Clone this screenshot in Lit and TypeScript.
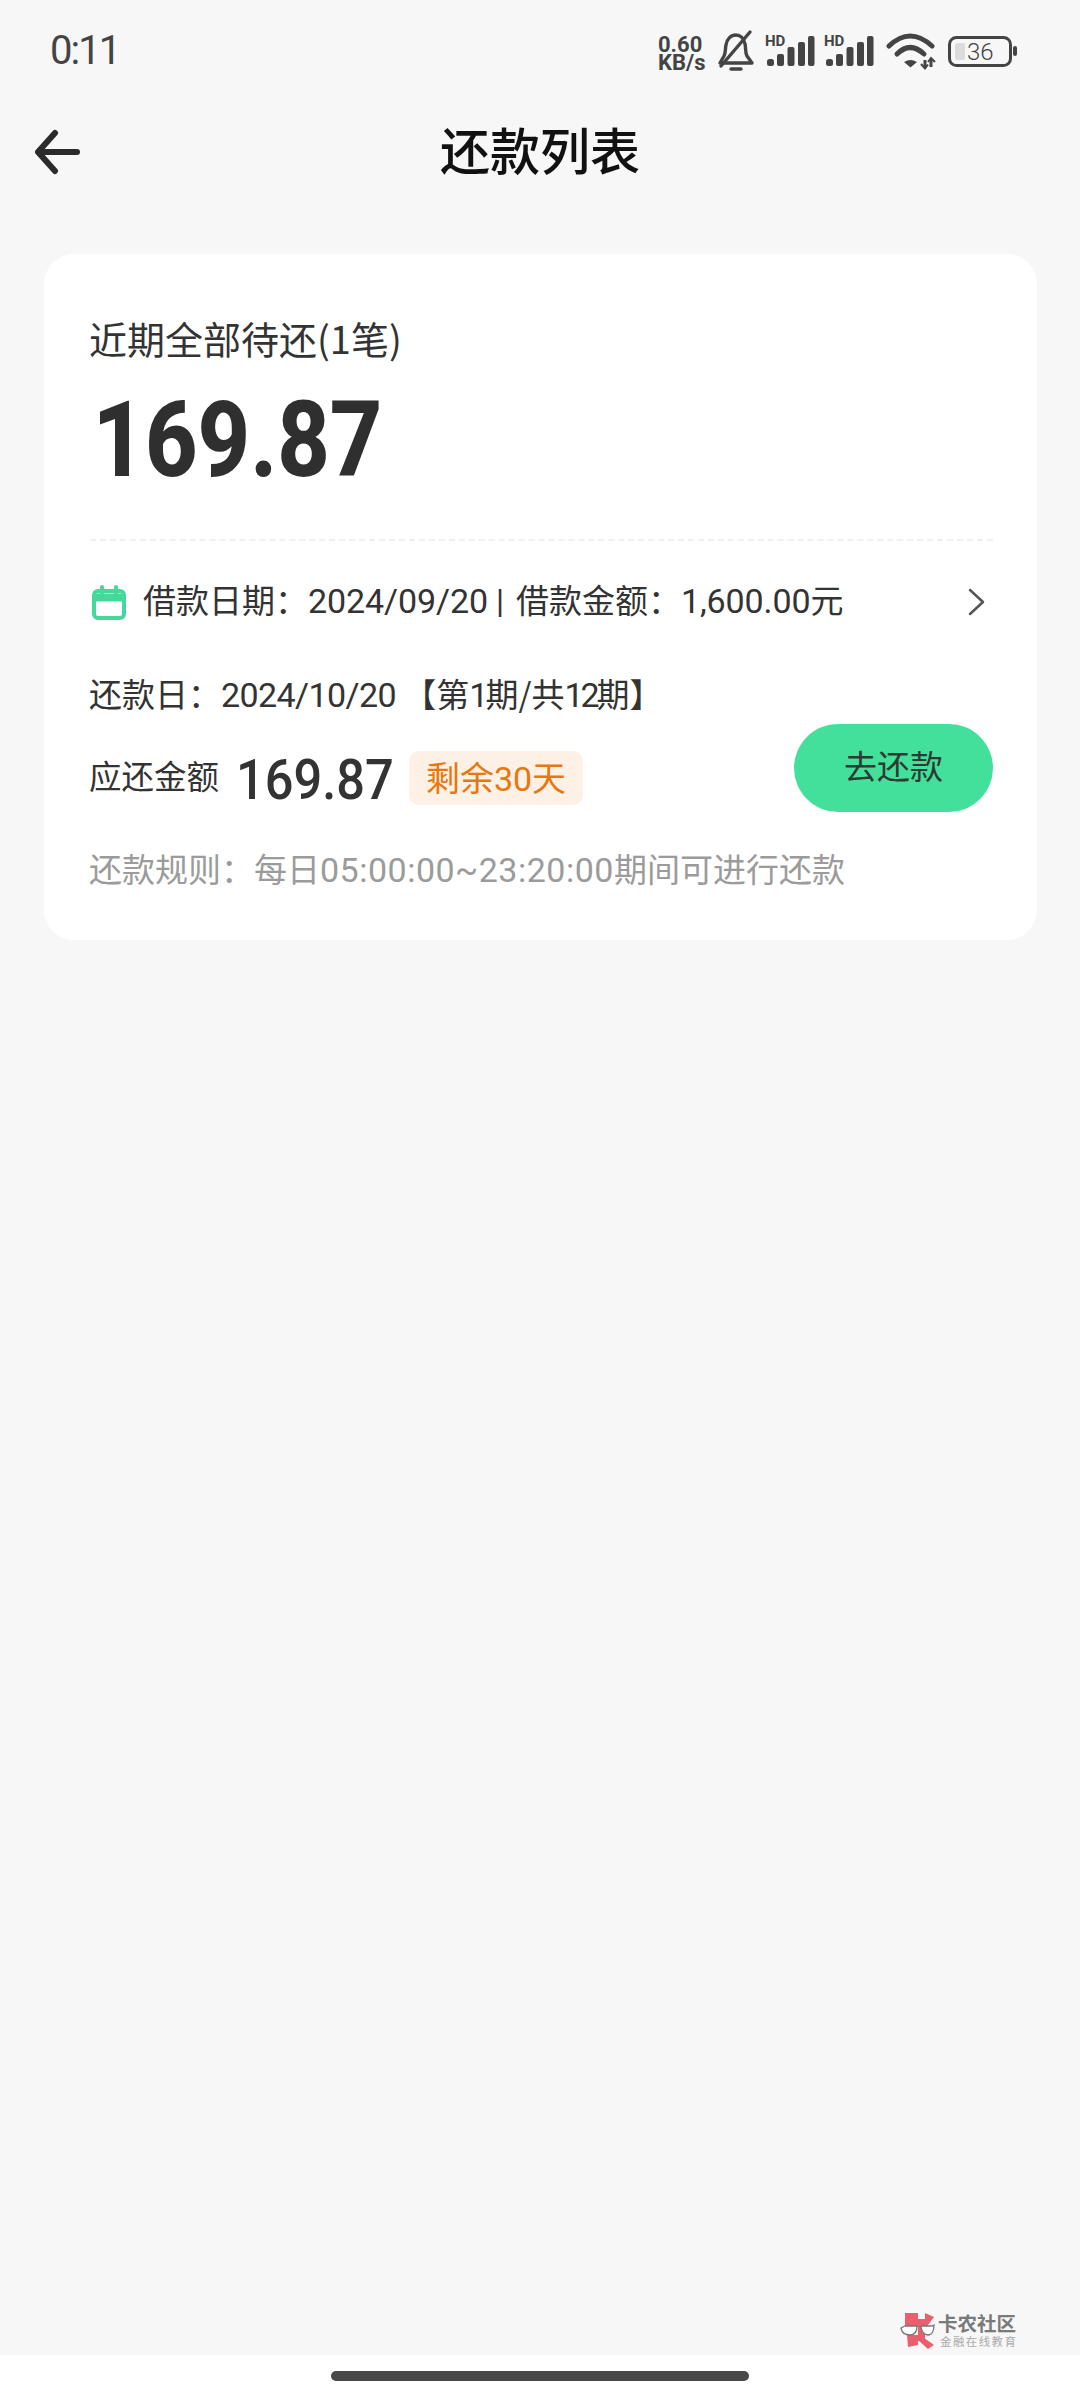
import { LitElement, css, html, svg } from 'lit';
import { customElement } from 'lit/decorators.js';

const signal = (x: number) => svg`
  <text x=${x} y="10" class="hd">HD</text>
  <rect x=${x + 2} y="23" width="7" height="7" rx="2.5" />
  <rect x=${x + 12} y="18" width="7" height="12" rx="2" />
  <rect x=${x + 22.5} y="11" width="7" height="19" rx="2" />
  <rect x=${x + 33} y="6" width="7" height="24" rx="2" />
  <rect x=${x + 43} y="0" width="6.5" height="30" rx="2" />
`;

@customElement('app-root')
export class AppRoot extends LitElement {
  static override styles = css`
    :host {
      display: block;
      font-family: 'Noto Sans CJK SC', 'Noto Sans', sans-serif;
      color: #333;
    }
    .page {
      position: relative;
      display: flex;
      flex-direction: column;
      height: 2400px;
      background: #f7f7f7;
    }
    .status {
      display: flex;
      align-items: center;
      justify-content: space-between;
      height: 102px;
      padding: 0 63px 0 50px;
      box-sizing: border-box;
    }
    .time {
      font: 400 40px/50px Roboto, sans-serif;
      color: #444;
      letter-spacing: -2px;
    }
    .status-icons {
      display: block;
      width: 360px;
      height: 48px;
      margin-right: -1px;
    }
    .status-icons text {
      font-family: Roboto, sans-serif;
      fill: #444;
    }
    .status-icons .speed {
      font-size: 22px;
      font-weight: 700;
    }
    .status-icons .hd {
      font-size: 15px;
      font-weight: 700;
    }
    .status-icons .level {
      font-size: 24px;
      font-weight: 300;
    }
    .nav {
      display: flex;
      align-items: center;
      justify-content: center;
      position: relative;
      height: 100px;
    }
    .back {
      position: absolute;
      left: 34px;
      top: 26px;
      width: 48px;
      height: 48px;
    }
    .title {
      font-size: 50px;
      line-height: 60px;
      margin-bottom: 8px;
      font-weight: 500;
      color: #111;
    }
    .card {
      height: 686px;
      box-sizing: border-box;
      margin: 52px 43px 0 44px;
      padding: 62px 44px 0 45px;
      background: #fff;
      border-radius: 30px;
    }
    .label {
      height: 52px;
      font-size: 38px;
      line-height: 44px;
      color: #333;
    }
    .total {
      display: block;
      margin-top: 22px;
      height: 100px;
      font: 800 106px/100px Roboto, sans-serif;
      color: #2f2f2f;
      padding-left: 4px;
      transform: scaleX(0.86);
      transform-origin: left center;
    }
    .divider {
      margin-top: 49px;
      margin-left: 1px;
      border-top: 2px dashed #f0f0f0;
    }
    .loan {
      display: flex;
      align-items: center;
      height: 60px;
      margin-top: 31px;
      font-size: 33px;
      color: #333;
    }
    .loan .calendar {
      width: 36px;
      height: 36px;
      margin: 2px 16px 0 2px;
      flex: none;
    }
    .loan .text {
      flex: 1;
      line-height: 54px;
      height: 60px;
      white-space: nowrap;
    }
    .num {
      font-family: Roboto, sans-serif;
      font-size: 34px;
      letter-spacing: -0.1px;
    }
    .num.date {
      letter-spacing: -0.6px;
    }
    .num.narrow {
      letter-spacing: -3px;
    }
    .num.wide {
      letter-spacing: 0.5px;
    }
    .sep {
      margin: 0 12px 0 8px;
      font-family: Roboto, sans-serif;
    }
    .loan .chevron {
      width: 20px;
      height: 28px;
      margin-right: 6px;
    }
    .repay {
      display: flex;
      justify-content: space-between;
      margin-top: 38px;
    }
    .line {
      height: 50px;
      line-height: 46px;
      font-size: 33px;
      white-space: nowrap;
    }
    .due {
      display: flex;
      align-items: center;
      height: 54px;
      margin-top: 31px;
      font-size: 32.5px;
    }
    .due-label {
      line-height: 48px;
      height: 54px;
    }
    .due-amount {
      margin-left: 17px;
      width: 156px;
      height: 54px;
      font: 500 55px/58px Roboto, sans-serif;
      color: #333;
      transform: scaleX(0.92);
      transform-origin: left center;
    }
    .badge {
      margin-left: 17px;
      padding: 0 17px;
      height: 54px;
      line-height: 52px;
      border-radius: 10px;
      background: #fdf1e6;
      color: #e8770f;
      font-size: 34px;
      white-space: nowrap;
    }
    .pay {
      width: 199px;
      height: 88px;
      margin-top: 54px;
      border: 0;
      border-radius: 44px;
      background: #43e09b;
      color: #2b3a32;
      font: 400 33px/82px 'Noto Sans CJK SC', sans-serif;
      padding: 0 0 6px;
    }
    .rule {
      height: 50px;
      line-height: 37px;
      margin-top: 38px;
      font-size: 33px;
      color: #9b9b9b;
      white-space: nowrap;
    }
    .spacer {
      flex: 1;
    }
    .home {
      display: flex;
      align-items: center;
      justify-content: center;
      height: 45px;
      background: #fff;
    }
    .home div {
      width: 418px;
      height: 10px;
      margin-bottom: 3px;
      border-radius: 5px;
      background: #484848;
    }
    .watermark {
      position: absolute;
      left: 900px;
      top: 2311px;
      display: flex;
      align-items: center;
      gap: 2px;
    }
    .watermark svg {
      width: 36px;
      height: 38px;
    }
    .wm-name {
      font-size: 19.5px;
      line-height: 22px;
      font-weight: 700;
      color: #7a7a7a;
      white-space: nowrap;
    }
    .wm-sub {
      font-size: 11.5px;
      line-height: 14px;
      letter-spacing: 1.4px;
      color: #aaa;
      white-space: nowrap;
      margin-left: 2px;
    }
  `;

  override render() {
    return html`
      <div class="page">
        <div class="status">
          <span class="time">0:11</span>
          <svg class="status-icons" viewBox="0 -2 360 48" fill="#444">
            <text x="0" y="23" class="speed">0.60</text>
            <text x="0" y="41" class="speed">KB/s</text>
            <g fill="none" stroke="#444" stroke-width="3.4" stroke-linecap="round" stroke-linejoin="round">
              <path d="M62 34h32l-5-7c-2-4-1-8-2-12-1-6-5-9-9-9-5 0-9 4-10 10-1 4 0 7-2 11z" />
              <path d="M63 37 92 3" />
              <path d="M73 40h10" />
            </g>
            <g transform="translate(107 7)">${signal(0)}${signal(59)}</g>
            <g fill="none" stroke="#444" stroke-linecap="round">
              <path d="M231 17Q252-3 274 17" stroke-width="5" />
              <path d="M239 25Q252 12 266 25" stroke-width="5" />
            </g>
            <path d="M246 33q6.500-4 13 0l-6.500 5.500z" />
            <path d="M267 31v8M273 30v8" stroke="#444" stroke-width="3" />
            <path d="M263 35l4 4.500 3-4M270 33l3-4 4 4" fill="none" stroke="#444" stroke-width="2" />
            <rect x="291.500" y="8.500" width="61" height="28" rx="7" fill="none" stroke="#444" stroke-width="3" />
            <rect x="297" y="14" width="10" height="17" rx="2" fill="#dcdcdc" />
            <text x="309" y="30.500" class="level">36</text>
            <rect x="355" y="17" width="4" height="10" rx="2" />
          </svg>
        </div>
        <div class="nav">
          <svg class="back" viewBox="0 0 48 48" fill="none" stroke="#2b2b2b" stroke-width="6" stroke-linecap="round" stroke-linejoin="round">
            <path d="M43 24H5M21 5 4 24l17 19" />
          </svg>
          <span class="title">还款列表</span>
        </div>
        <div class="card">
          <div class="label">近期全部待还(1笔)</div>
          <div class="total">169.87</div>
          <div class="divider"></div>
          <div class="loan">
            <svg class="calendar" viewBox="0 0 36 36" fill="none" stroke="#43d99a" stroke-width="4" stroke-linecap="round" stroke-linejoin="round">
              <rect x="3" y="6" width="30" height="27" rx="4" />
              <path d="M3 10h30v5H3z" fill="#43d99a" stroke-width="3" />
              <path d="M11 2v6M25 2v6" />
            </svg>
            <span class="text">借款日期：<span class="num">2024/09/20</span><span class="sep">|</span>借款金额：<span class="num">1,600.00</span>元</span>
            <svg class="chevron" viewBox="0 0 20 28" fill="none" stroke="#555" stroke-width="2.500" stroke-linecap="round" stroke-linejoin="round">
              <path d="M3 2l13 12L3 26" />
            </svg>
          </div>
          <div class="repay">
            <div>
              <div class="line">还款日：<span class="num date">2024/10/20</span> 【第<span class="num narrow">1</span>期/共<span class="num narrow">12</span>期】</div>
              <div class="due">
                <span class="due-label">应还金额</span>
                <span class="due-amount">169.87</span>
                <span class="badge">剩余<span class="num">30</span>天</span>
              </div>
            </div>
            <button class="pay">去还款</button>
          </div>
          <div class="rule">还款规则：每日<span class="num wide">05:00:00~23:20:00</span>期间可进行还款</div>
        </div>
        <div class="spacer"></div>
        <div class="watermark">
          <svg viewBox="0 0 36 38">
            <path fill="#e8606e" d="M5 2h13v14h-13zM18 8h7v22h-7zM25 2l9 4-9 12zM7 24h11v10l-10 2zM20 24l14 10-6 4-10-9z" />
            <g fill="#fff" stroke="#777" stroke-width="1.300">
              <path d="M1 17l4-2h12c0 6-3 9-7 9s-8-2-9-7z" />
              <path d="M21 15h11l2-1c0 6-2 10-6 10s-7-4-7-9z" />
            </g>
          </svg>
          <div>
            <div class="wm-name">卡农社区</div>
            <div class="wm-sub">金融在线教育</div>
          </div>
        </div>
        <div class="home"><div></div></div>
      </div>
    `;
  }
}
